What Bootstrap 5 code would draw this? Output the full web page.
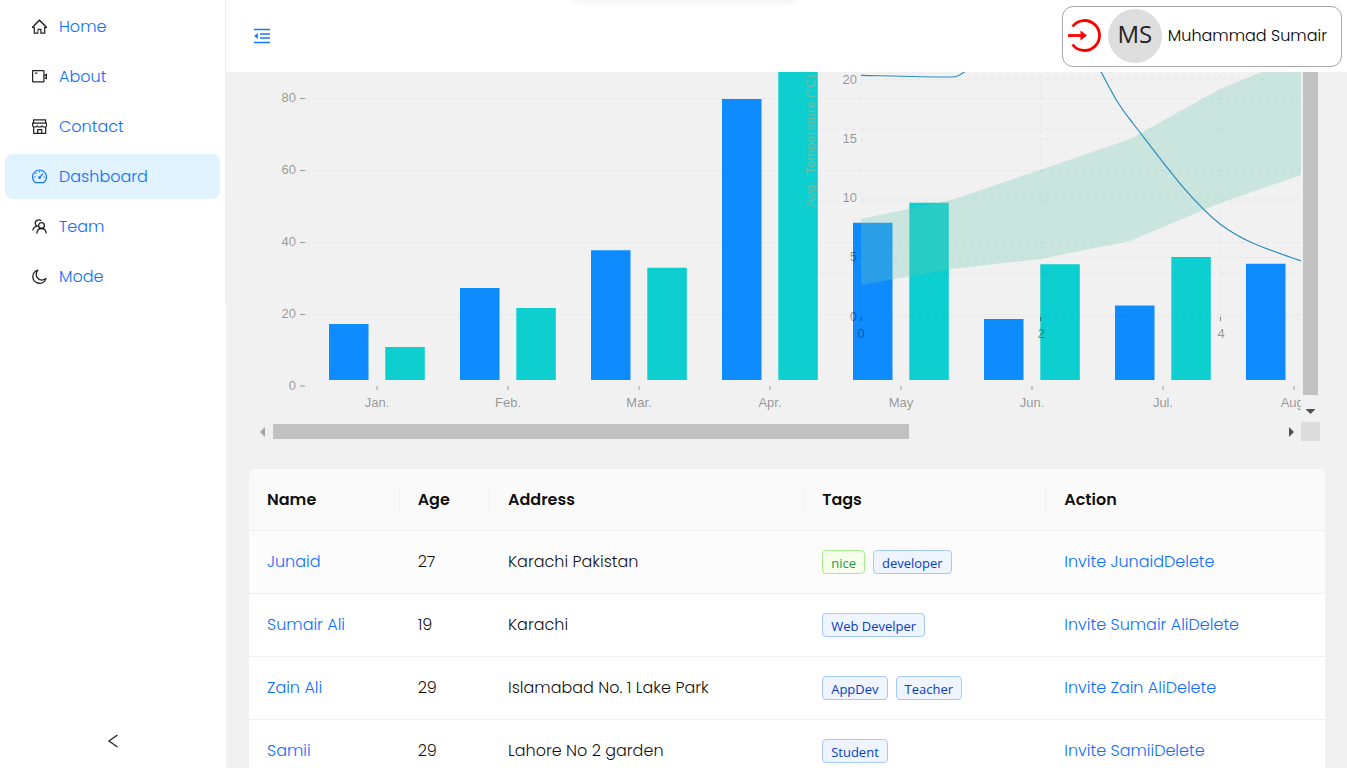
<!DOCTYPE html>
<html lang="en">
<head>
<meta charset="utf-8">
<meta name="viewport" content="width=device-width, initial-scale=1">
<title>Dashboard</title>
<link href="https://cdn.jsdelivr.net/npm/bootstrap@5.3.0/dist/css/bootstrap.min.css" rel="stylesheet">
<style>
body { font-family: Poppins, Inter, sans-serif; font-size: 16px; font-weight: 300; color: rgba(0,0,0,.95); background: #f1f1f1; }
a { text-decoration: none; color: #0d6efd; }
.side { width: 226px; }
.side .nav { gap: 5px; padding: 4px 5px 5px; border-right: 1px solid #eee; }
.side .nav-link { height: 45px; border-radius: 8px; padding: 0 27px; gap: 12px; color: #0d6efd; }
.side .nav-link svg { color: rgba(0,0,0,.88); }
.side .nav-link.active { background: #e0f3ff; }
.side .nav-link.active svg { color: #1677ff; }
.fold { width: 226px; height: 54px; }
.topbar { height: 72px; padding: 0 5px 0 28px; }
.user-box { height: 61px; border: 1px solid #a6a6a6; border-radius: 11px; padding: 0 14px 0 5px; gap: 6px; color: #000; }
.user-pic { width: 54px; height: 54px; background: #ddd; font: 24px/1 "Open Sans", sans-serif; color: #222; }
.page { padding: 0 22px 0 23px; }
.chart-view { margin: 0 5px 28px; }
.chart-body { height: 350px; }
.chart-body text { font: 13px "Liberation Sans", sans-serif; fill: #000; fill-opacity: .4; }
.chart-body .axis-title { fill: #8fb996; fill-opacity: .75; white-space: pre; }
.bar-v { width: 19px; padding: 0 2px; }
.bar-v div { height: 323px; background: #c1c1c1; }
.bar-h { height: 19px; padding: 2px 7px 2px 6px; }
.thumb-h { width: 61.5%; height: 15px; background: #c1c1c1; }
.corner { width: 19px; height: 19px; background: #dcdcdc; }
.people { border-radius: 8px 8px 0 0; background: #fff; table-layout: fixed; }
.people th, .people td { padding: 0 18px; border-bottom: 1px solid #f0f0f0; white-space: nowrap; }
.people th { height: 61px; padding-top: 1px; background: #fafafa; font-weight: 600; position: relative; }
.people td { height: 63px; }
.people th:not(:last-child)::after { content: ""; position: absolute; right: 0; top: 18px; bottom: 18px; width: 1px; background: #f0f0f0; }
.people th:first-child { border-top-left-radius: 8px; }
.people th:last-child { border-top-right-radius: 8px; }
.people .hovered td { background: #fcfcfc; }
.w-name { width: 14%; } .w-age { width: 8.4%; } .w-addr { width: 29.2%; } .w-tags { width: 22.5%; }
.chip { display: inline-block; height: 24px; line-height: 24px; padding: 0 8px; border: 1px solid #a4c8ff; border-radius: 4px; background: #eff5ff; color: #0a3cc0; font-family: "Open Sans", sans-serif; font-weight: 400; font-size: 13px; vertical-align: middle; }
.chip.green { border-color: #a5ec8b; background: #f5ffec; color: #1c9a3c; }
.ghost { position: absolute; top: -10px; left: 42.7%; width: 220px; height: 10px; box-shadow: 0 0 8px rgba(0,0,0,.1); }
</style>
</head>
<body>
<div class="d-flex vh-100 overflow-hidden">
  <aside class="side bg-white d-flex flex-column flex-shrink-0">
    <nav class="nav flex-column">
      <a class="nav-link d-flex align-items-center" href="#"><svg width="15" height="15" viewBox="64 64 896 896" fill="currentColor"><path d="M946.500 505L534.600 93.400a31.930 31.930 0 0 0-45.200 0L77.500 505c-12 12-18.800 28.300-18.800 45.300 0 35.300 28.700 64 64 64h43.400V908c0 17.700 14.300 32 32 32H448V716h112v224h265.900c17.700 0 32-14.300 32-32V614.300h43.400c17 0 33.300-6.700 45.300-18.800 24.900-25 24.900-65.500-.1-90.500zM786 542v324H632V676c0-18-14-32-32-32H424c-18 0-32 14-32 32v190H238V542h-70l344-344 344 344z"/></svg>Home</a>
      <a class="nav-link d-flex align-items-center" href="#"><svg width="15" height="15" viewBox="0 0 15 15" fill="none" stroke="currentColor" stroke-width="1.200"><rect x=".6" y="1.600" width="11.300" height="11.300" rx=".5"/><path d="M15 5l-2.600 1.600M15 10l-2.600-1.600M14.500 4.800v5.400M3 4.200h2.400"/></svg>About</a>
      <a class="nav-link d-flex align-items-center" href="#"><svg width="15" height="15" viewBox="0 0 15 15" fill="none" stroke="currentColor" stroke-width="1.200"><path d="M1.600 4V.9h12V4M.6 4.200h14v2q0 1.800-2.300 1.800T10 6.500Q10 8 7.600 8T5.200 6.500Q5.200 8 2.900 8T.6 6.200zM1.700 8v6.300h12V8M5.700 14v-3.300h4V14"/></svg>Contact</a>
      <a class="nav-link active d-flex align-items-center" href="#" aria-current="page"><svg width="15" height="15" viewBox="0 0 15 15" fill="none" stroke="currentColor" stroke-width="1.200"><path d="M3.300 13.600A7 7 0 1 1 11.700 13.600z" stroke-linejoin="round"/><path d="M7.500 2v1.500M3.600 3.900l1 1M2 8h1.600M11.500 8H13M7.600 8.500L11 4.600"/><circle cx="7.500" cy="8.700" r=".8"/></svg>Dashboard</a>
      <a class="nav-link d-flex align-items-center" href="#"><svg width="15" height="15" viewBox="0 0 15 15" fill="none" stroke="currentColor" stroke-width="1.300"><circle cx="9.500" cy="6.500" r="2.900"/><path d="M4.800 14.500c.2-3.200 2-5 4.700-5s4.500 1.800 4.700 5M9.200 1.800C7.500.2 3.200.6 3.200 4.200c0 1.500.8 2.300 1.800 2.900C2.600 7.600 1.100 9.300.9 11.500"/></svg>Team</a>
      <a class="nav-link d-flex align-items-center" href="#"><svg width="15" height="15" viewBox="0 0 15 15" fill="none" stroke="currentColor" stroke-width="1.300"><path d="M5.900 1.100A6.700 6.700 0 1 0 14 9.400 5.300 5.300 0 0 1 5.900 1.100z" stroke-linejoin="round"/></svg>Mode</a>
    </nav>
    <button class="fold btn border-0 rounded-0 mt-auto p-0 d-flex align-items-center justify-content-center" aria-label="Collapse"><svg width="12" height="14" viewBox="0 0 12 14" fill="none" stroke="#222" stroke-width="1.300"><path d="M10.500 1L2 7l8.500 6"/></svg></button>
  </aside>
  <div class="flex-grow-1 overflow-hidden">
    <header class="topbar bg-white d-flex align-items-center justify-content-between">
      <button class="btn p-0 border-0 d-flex" aria-label="Toggle menu"><svg width="16" height="16" viewBox="0 0 16 16" fill="none" stroke="#1677ff" stroke-width="1.500"><path d="M0 1.600h16M6 6h10M6 10h10M0 14.600h16"/><path d="M.2 8l3.600-3v6z" fill="#1677ff" stroke="none"/></svg></button>
      <div class="user-box d-flex align-items-center">
        <button class="btn p-0 border-0 d-flex" aria-label="Log out"><svg width="34" height="34" viewBox="0 0 34 34" fill="none" stroke="red" stroke-width="2.800"><path d="M4.500 7.500A15 15 0 1 1 4.500 25.500"/><path d="M0 16.500h14"/><path d="M12.500 11.500l6.500 5-6.500 5z" fill="red" stroke="none"/></svg></button>
        <span class="user-pic rounded-circle d-flex align-items-center justify-content-center pb-1">MS</span>
        <span>Muhammad Sumair</span>
      </div>
    </header>
    <main class="page">
      <section class="chart-view">
        <div class="d-flex">
          <div class="chart-body flex-grow-1 overflow-hidden">
            <svg class="d-block" width="1750" height="350" viewBox="254 72 1750 350">
              <g stroke="#000" stroke-opacity=".05" stroke-dasharray="4 4">
                <path d="M305 98.500H2000M305 170.500H2000M305 242.500H2000M305 314.500H2000M305 386H2000"/>
              </g>
              <path d="M300 98.500h5M300 170.500h5M300 242.500h5M300 314.500h5M300 386h5M377 386v4M508 386v4M639 386v4M770 386v4M901 386v4M1032 386v4M1163 386v4M1294 386v4" stroke="#999"/>
              <g text-anchor="end">
                <text x="296" y="102">80</text><text x="296" y="174">60</text><text x="296" y="246">40</text><text x="296" y="318">20</text><text x="296" y="390">0</text>
              </g>
              <g text-anchor="middle">
                <text x="377" y="407">Jan.</text><text x="508" y="407">Feb.</text><text x="639" y="407">Mar.</text><text x="770" y="407">Apr.</text><text x="901" y="407">May</text><text x="1032" y="407">Jun.</text><text x="1163" y="407">Jul.</text><text x="1294" y="407">Aug.</text>
              </g>
              <path fill="#0d8bff" d="M329 324h39.500v56H329zM460 288h39.500v92H460zM591 250.300h39.500V380H591zM722 99h39.500v281H722zM853 222.700h39.500V380H853zM984 319h39.500v61H984zM1115 305.500h39.500V380H1115zM1246 263.700h39.500V380H1246z"/>
              <path fill="#0dcfcf" d="M385.300 347h39.500v33h-39.500zM516.300 308h39.500v72h-39.500zM647.300 267.700h39.500V380h-39.500zM778.300 60h39.500v320h-39.500zM909.300 202.700h39.500V380h-39.500zM1040.300 264.300h39.500V380h-39.500zM1171.300 257h39.500V380h-39.500z"/>
              <path stroke="#000" stroke-opacity=".045" stroke-dasharray="4 4" fill="none" d="M820 129.500H1700M820 201.500H1700M820 273.500H1700M861 79.500H1700M861 139H1700M861 198.500H1700M861 257.500H1700M861 317H1700M861 317V75M1040.500 317V75M1220.500 317V75"/>
              <path d="M861 317v4M1040.500 317v4M1220.500 317v4" stroke="#000" stroke-opacity=".45"/>
              <path fill="rgb(108,201,174)" fill-opacity=".3" d="M861 219L951 200 1040 170 1130 139 1220 89 1301 56 1310 52V172L1301 175 1220 203 1130 241 1040 259 951 269 861 285z"/>
              <path fill="none" stroke="#2b8cbe" stroke-width="1.200" d="M861 75.300C890 76 920 77 951 77c8 0 10-3 18-8M1099 68C1114 96 1118 105 1132 122C1165 165 1190 200 1220 224C1245 243 1270 250 1310 264"/>
              <g text-anchor="end">
                <text x="857" y="84">20</text><text x="857" y="143">15</text><text x="857" y="202">10</text><text x="857" y="261">5</text><text x="857" y="321">0</text>
              </g>
              <g text-anchor="middle"><text x="861" y="338">0</text><text x="1041" y="338">2</text><text x="1221" y="338">4</text></g>
              <text class="axis-title" transform="translate(815 207) rotate(-90)">Avg.  Temperature (°C)</text>
            </svg>
          </div>
          <div class="bar-v d-flex flex-column align-items-center flex-shrink-0">
            <div class="w-100"></div>
            <svg class="mt-auto mb-2" width="11" height="5"><path d="M.500 0h10l-5 5z" fill="#505050"/></svg>
          </div>
        </div>
        <div class="d-flex">
          <div class="bar-h d-flex align-items-center flex-grow-1">
            <svg class="me-2 flex-shrink-0" width="5" height="10"><path d="M5 0v10L0 5z" fill="#a3a3a3"/></svg>
            <div class="thumb-h"></div>
            <svg class="ms-auto" width="5" height="10"><path d="M0 0v10l5-5z" fill="#505050"/></svg>
          </div>
          <div class="corner flex-shrink-0"></div>
        </div>
      </section>
      <table class="people w-100">
        <thead><tr><th class="w-name">Name</th><th class="w-age">Age</th><th class="w-addr">Address</th><th class="w-tags">Tags</th><th>Action</th></tr></thead>
        <tbody>
          <tr class="hovered"><td><a href="#">Junaid</a></td><td>27</td><td>Karachi Pakistan</td><td><span class="chip green me-2">nice</span><span class="chip">developer</span></td><td><a href="#">Invite Junaid</a><a href="#">Delete</a></td></tr>
          <tr><td><a href="#">Sumair Ali</a></td><td>19</td><td>Karachi</td><td><span class="chip">Web Develper</span></td><td><a href="#">Invite Sumair Ali</a><a href="#">Delete</a></td></tr>
          <tr><td><a href="#">Zain Ali</a></td><td>29</td><td>Islamabad No. 1 Lake Park</td><td><span class="chip me-2">AppDev</span><span class="chip">Teacher</span></td><td><a href="#">Invite Zain Ali</a><a href="#">Delete</a></td></tr>
          <tr><td><a href="#">Samii</a></td><td>29</td><td>Lahore No 2 garden</td><td><span class="chip">Student</span></td><td><a href="#">Invite Samii</a><a href="#">Delete</a></td></tr>
        </tbody>
      </table>
    </main>
  </div>
</div>
<div class="ghost"></div>
<script src="https://cdn.jsdelivr.net/npm/bootstrap@5.3.0/dist/js/bootstrap.bundle.min.js"></script>
</body>
</html>
